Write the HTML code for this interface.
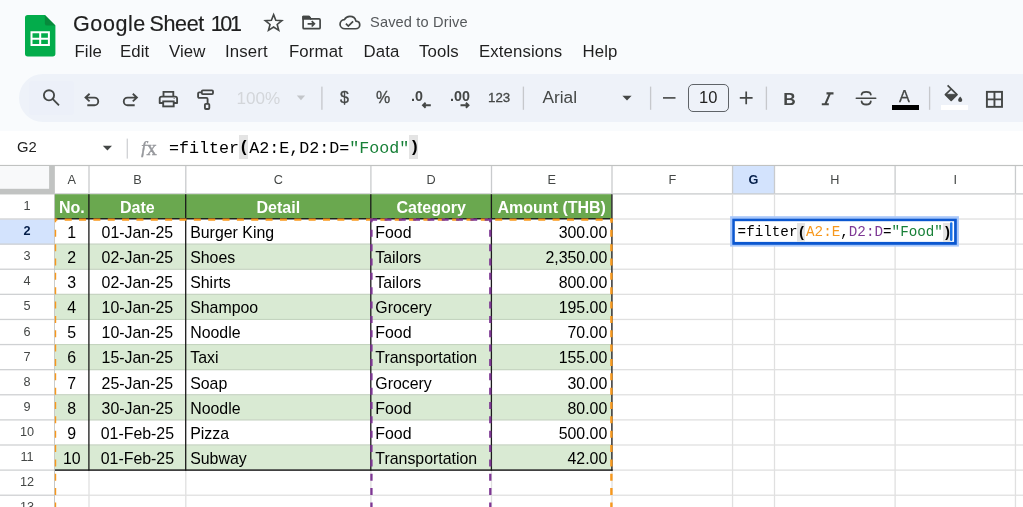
<!DOCTYPE html>
<html lang="en"><head><meta charset="utf-8"><title>Google Sheet 101</title>
<style>
*{box-sizing:border-box;margin:0;padding:0}
html,body{width:1023px;height:507px;overflow:hidden;background:#f9fbfd;font-family:"Liberation Sans",sans-serif;color:#1f1f1f}
.abs{position:absolute}
#app{position:relative;width:1023px;height:507px;overflow:hidden;will-change:transform}
.title{left:73px;top:11px;font-size:21.5px;line-height:26px;color:#1f1f1f;-webkit-text-stroke:.2px #1f1f1f;white-space:nowrap;letter-spacing:-0.35px}
.menu{top:42px;font-size:16.8px;letter-spacing:.12px;line-height:20px;color:#1f1f1f;white-space:nowrap}
.saved{left:370px;top:13px;font-size:14.6px;letter-spacing:.15px;line-height:18px;color:#55585b;white-space:nowrap}
.toolbar{left:19px;top:74px;width:1100px;height:47.5px;border-radius:24px;background:#eef2f9}
.tbt{font-size:15.5px;line-height:20px;color:#444746;white-space:nowrap}
.sep{width:1px;background:#c7c7c7}
.fbar{left:0;top:130.5px;width:1023px;height:35px;background:#fff}
.grid{left:0;top:165.3px;width:1023px;height:345px;background:#fff}
.vl{width:1px;background:#e1e1e1}
.hl{height:1px;background:#e1e1e1}
.ch{top:165.6px;height:28px;font-size:12.7px;line-height:28px;text-align:center;color:#444746}
.rh{left:0;width:54px;height:25px;font-size:12.7px;line-height:25px;text-align:center;color:#444746}
.c{height:25.1px;font-size:15.9px;line-height:27px;white-space:nowrap;color:#000;overflow:hidden}
.hd{font-weight:bold;color:#fff;text-align:center;font-size:16px}
.hp{background:linear-gradient(#e4e4e4,#e4e4e4) no-repeat left top/91% 100%;font-weight:bold}
.mono{font-family:"Liberation Mono","DejaVu Sans Mono",monospace}
</style></head><body><div id="app">

<svg class="abs" style="left:25px;top:14.850px" width="31" height="42" viewBox="0 0 31 42">
<path d="M2.800 0H19.900L30.400 10.600V38.750a2.800 2.800 0 0 1-2.800 2.800H2.800a2.800 2.800 0 0 1-2.800-2.800V2.800a2.800 2.800 0 0 1 2.800-2.800z" fill="#03ac4b"/>
<path d="M19.900 0L30.400 10.600H22.100a2.200 2.200 0 0 1-2.200-2.200z" fill="#078a3c"/>
<path d="M5.500 16.350h19.400v14.600H5.500z M7.500 18.350v4.300h6.700v-4.300z M16.200 18.350v4.300h6.700v-4.300z M7.500 24.650v4.300h6.700v-4.300z M16.200 24.650v4.300h6.700v-4.300z" fill="#fff" fill-rule="evenodd"/>
</svg>
<div class="abs title" style="letter-spacing:.6px">Google</div><div class="abs title" style="left:149.500px">Sheet</div><div class="abs title" style="left:210.800px;letter-spacing:-2.400px">101</div>
<svg class="abs" style="left:0;top:0" width="1023" height="70" viewBox="0 0 1023 70" fill="none" stroke="#444746" stroke-width="1.700" stroke-linejoin="round">
<path d="M273.60 14.60L275.80 20.27L281.87 20.61L277.17 24.46L278.71 30.34L273.60 27.05L268.49 30.34L270.03 24.46L265.33 20.61L271.40 20.27Z" stroke-width="1.600" stroke-linejoin="miter"/>
<path d="M303.100 16.700H309.200L310.800 18.900H319.100a1 1 0 0 1 1 1V27.700a1 1 0 0 1-1 1H304.100a1 1 0 0 1-1-1Z"/>
<path d="M303.100 16.700H309.200L310.800 18.900H303.100Z" fill="#444746"/>
<path d="M307.600 23.800H314M311.700 21.100L314.400 23.800L311.700 26.500" stroke-linejoin="miter"/>
<path transform="translate(340.050,13.350) scale(0.821,0.770)" vector-effect="non-scaling-stroke" d="M19.350 10.040C18.670 6.590 15.640 4 12 4 9.110 4 6.600 5.640 5.350 8.040 2.340 8.360 0 10.910 0 14c0 3.310 2.690 6 6 6h13c2.760 0 5-2.240 5-5 0-2.640-2.050-4.780-4.650-4.960z"/>
<path d="M345.900 23.700L348.300 26.100L353.100 21.300" stroke-linejoin="miter"/>
</svg>
<div class="abs saved">Saved to Drive</div>
<div class="abs menu" style="left:74.5px">File</div>
<div class="abs menu" style="left:120px">Edit</div>
<div class="abs menu" style="left:169px">View</div>
<div class="abs menu" style="left:225px">Insert</div>
<div class="abs menu" style="left:289px">Format</div>
<div class="abs menu" style="left:363.5px">Data</div>
<div class="abs menu" style="left:419px">Tools</div>
<div class="abs menu" style="left:479px">Extensions</div>
<div class="abs menu" style="left:582.5px">Help</div>
<div class="abs toolbar"></div>
<div class="abs" style="left:29px;top:80.500px;width:45px;height:34px;background:#ecf0f9;border-radius:3px"></div>
<svg class="abs" style="left:0;top:0" width="1023" height="130" viewBox="0 0 1023 130" fill="none" stroke="#444746" stroke-width="2" stroke-linecap="round" stroke-linejoin="round">
<circle cx="49" cy="95.300" r="5.100" stroke-width="1.850"/><path d="M52.600 98.900L59 105.300" stroke-linecap="butt" stroke-width="1.850"/>
<path d="M89.600 93.800L85.500 97.600L89.600 101.400M85.900 97.600H94.400a3.850 3.850 0 0 1 0 7.700H87.300" stroke-width="1.850" stroke-linecap="butt" stroke-linejoin="miter"/>
<path d="M132.800 93.800L136.900 97.600L132.800 101.400M136.500 97.600H127.600a3.850 3.850 0 0 0 0 7.700H134.700" stroke-width="1.850" stroke-linecap="butt" stroke-linejoin="miter"/>
<path d="M163.500 96V91.800H173.300V96" stroke-linecap="butt" stroke-width="1.850" stroke-linejoin="miter"/><path d="M163 103H159.700V98.600a2 2 0 0 1 2-2H175.100a2 2 0 0 1 2 2V103H174" stroke-width="1.850" stroke-linecap="butt"/><rect x="163.200" y="101.400" width="10.500" height="5" stroke-width="1.850" stroke-linejoin="miter"/><circle cx="174.100" cy="98.600" r=".5" fill="#444746" stroke="none"/>
<rect x="201.800" y="90.400" width="11.200" height="3.700" rx="1" stroke-width="1.850"/><path d="M201.800 92.300H199.300a1.200 1.200 0 0 0-1.200 1.200V96.700a1.200 1.200 0 0 0 1.200 1.200H206.400a1.200 1.200 0 0 1 1.200 1.200V103.600" stroke-linecap="butt" stroke-width="1.850"/><rect x="204.900" y="103.800" width="4.400" height="5.200" rx="1" stroke-width="1.850"/>
<path d="M430.800 105.300H423.400M425.600 102.800L423 105.300l2.600 2.500" stroke-width="1.900" stroke-linecap="butt" stroke-linejoin="miter"/>
<path d="M460.500 105.300H468.100M465.900 102.800L468.500 105.300l-2.600 2.500" stroke-width="1.900" stroke-linecap="butt" stroke-linejoin="miter"/>
<path d="M663 97.900H675.500" stroke-width="1.600" stroke-linecap="butt"/>
<path d="M739.800 97.900H752.600M746.200 91.500V104.300" stroke-width="1.700" stroke-linecap="butt"/>
<path d="M826.500 93.400H833.500M821.800 104.200H828.800M830 93.400L825.300 104.200" stroke-width="2.100" stroke-linecap="butt"/>
<path d="M856.300 98.200H875.700" stroke-width="1.600"/><path d="M870.800 94.600C870.600 92.900 868.700 91.900 866.200 91.900S861.800 92.900 861.600 94.600" stroke-width="1.800"/><path d="M861.600 101.300C861.800 103.400 863.700 104.500 866.200 104.500S870.600 103.400 870.800 101.300" stroke-width="1.800"/>
<rect x="986.900" y="91.850" width="15.100" height="15" stroke-width="1.900" stroke-linejoin="miter"/><path d="M994.450 91.850V106.850M986.900 99.350H1002" stroke-linecap="butt" stroke-width="1.900"/>
</svg>
<svg class="abs" style="left:0;top:0" width="1023" height="130" viewBox="0 0 1023 130" fill="#444746">
<path d="M947.600 85.400L957 94.700L951.200 100.300L945.400 94.700L951.200 89" fill="none" stroke="#444746" stroke-width="1.700" stroke-linejoin="round" stroke-linecap="butt"/>
<path d="M945.400 94.300H957L951.200 100.300Z" stroke="#444746" stroke-width=".8" stroke-linejoin="round"/>
<path d="M960.200 96.400s2.100 2.300 2.100 3.600a2.100 2.100 0 0 1-4.200 0c0-1.300 2.100-3.600 2.100-3.600z"/>
</svg>
<div class="abs tbt" style="left:236.500px;top:89.200px;color:#d3d6da;font-size:17.100px">100%</div>
<svg class="abs" style="left:294px;top:90px" width="16" height="14" viewBox="0 0 16 14"><path d="M2.800 5.500H11.100L6.950 10.200Z" fill="#c3c6ca"/></svg>
<div class="abs tbt" style="left:340px;top:88px;font-size:16px;-webkit-text-stroke:.35px #444746">$</div>
<div class="abs tbt" style="left:376px;top:88px;font-size:16px;-webkit-text-stroke:.3px #444746">%</div>
<div class="abs tbt" style="left:411px;top:85.600px;font-weight:bold;font-size:15.200px;transform:scaleX(.94);transform-origin:0 0">.0</div>
<div class="abs tbt" style="left:449.500px;top:85.600px;font-weight:bold;font-size:15.200px;transform:scaleX(.94);transform-origin:0 0">.00</div>
<div class="abs tbt" style="left:488px;top:88.300px;font-size:13.300px;-webkit-text-stroke:.3px #444746">123</div>
<div class="abs tbt" style="left:542.500px;top:87px;font-size:17.300px">Arial</div>
<svg class="abs" style="left:620px;top:90px" width="16" height="14" viewBox="0 0 16 14"><path d="M2.400 5.700H11.600L7 10.400Z" fill="#444746"/></svg>
<div class="abs" style="left:688px;top:84px;width:40.500px;height:28px;border:1.200px solid #5f6368;border-radius:5px;text-align:center;font-size:16.500px;line-height:25.500px;color:#1f1f1f">10</div>
<div class="abs tbt" style="left:783.300px;top:89.200px;font-weight:bold;font-size:17.300px">B</div>
<div class="abs tbt" style="left:899px;top:86.300px;font-size:16.300px;-webkit-text-stroke:.25px #444746">A</div>
<div class="abs" style="left:891.700px;top:105.200px;width:27.200px;height:4.500px;background:#000"></div>
<div class="abs" style="left:940.500px;top:105.200px;width:27.500px;height:4.500px;background:#fff"></div>
<svg class="abs" style="left:0;top:0" width="1023" height="130" viewBox="0 0 1023 130"><rect x="321.25" y="86.600" width="1.300" height="23.200" fill="#c6c8cc"/><rect x="522.75" y="86.600" width="1.300" height="23.200" fill="#c6c8cc"/><rect x="649.95" y="86.600" width="1.300" height="23.200" fill="#c6c8cc"/><rect x="765.75" y="86.600" width="1.300" height="23.200" fill="#c6c8cc"/><rect x="928.95" y="86.600" width="1.300" height="23.200" fill="#c6c8cc"/></svg>
<div class="abs fbar"></div>
<div class="abs" style="left:17px;top:137.100px;font-size:14.800px;line-height:20px;color:#1f1f1f">G2</div>
<svg class="abs" style="left:100px;top:140px" width="16" height="14" viewBox="0 0 16 14"><path d="M2.800 5.700H12L7.400 10.400Z" fill="#444746"/></svg>
<svg class="abs" style="left:120px;top:136px" width="16" height="26" viewBox="0 0 16 26"><rect x="6.700" y="2.600" width="1.100" height="20" fill="#c7c9cc"/></svg>
<div class="abs" style="left:141.300px;top:136.100px;font-size:17.500px;line-height:22px;font-style:italic;font-family:'Liberation Serif',serif;color:#97999d;-webkit-text-stroke:.45px #97999d">f</div><div class="abs" style="left:146.400px;top:136.900px;font-size:20.500px;line-height:22px;font-family:'Liberation Serif',serif;color:#97999d;-webkit-text-stroke:.4px #97999d">x</div>
<div class="abs mono" style="left:169px;top:137.500px;font-size:16.700px;line-height:21px;color:#000;white-space:pre">=filter<span class="hp" style="padding:3.300px 0 1.500px">(</span>A2:E,D2:D=<span style="color:#188038">"Food"</span><span class="hp" style="padding:3.300px 0 1.500px">)</span></div>
<div class="abs grid"></div>
<svg class="abs" style="left:0;top:0" width="1023" height="507" viewBox="0 0 1023 507"><rect x="0.00" y="164.90" width="1023.00" height="1.20" fill="#c0c2c1"/>
<rect x="0.00" y="166.00" width="54.85" height="28.45" fill="#c1c3c2"/>
<rect x="0.00" y="166.00" width="49.10" height="22.80" fill="#f8f9fa"/>
<rect x="732.55" y="166.00" width="41.95" height="27.90" fill="#d3e3fd"/>
<rect x="0.00" y="219.41" width="54.55" height="25.11" fill="#d3e3fd"/>
<rect x="88.35" y="166.00" width="1.30" height="27.90" fill="#c9cbcd"/>
<rect x="185.15" y="166.00" width="1.30" height="27.90" fill="#c9cbcd"/>
<rect x="370.25" y="166.00" width="1.30" height="27.90" fill="#c9cbcd"/>
<rect x="490.85" y="166.00" width="1.30" height="27.90" fill="#c9cbcd"/>
<rect x="611.35" y="166.00" width="1.30" height="27.90" fill="#c9cbcd"/>
<rect x="731.90" y="166.00" width="1.30" height="27.90" fill="#c9cbcd"/>
<rect x="773.85" y="166.00" width="1.30" height="27.90" fill="#c9cbcd"/>
<rect x="894.45" y="166.00" width="1.30" height="27.90" fill="#c9cbcd"/>
<rect x="1014.80" y="166.00" width="1.30" height="27.90" fill="#c9cbcd"/>
<rect x="54.55" y="193.25" width="1000.00" height="1.30" fill="#c9cbcd"/>
<rect x="0.00" y="218.36" width="54.55" height="1.30" fill="#cfd1d3"/>
<rect x="0.00" y="243.47" width="54.55" height="1.30" fill="#cfd1d3"/>
<rect x="0.00" y="268.58" width="54.55" height="1.30" fill="#cfd1d3"/>
<rect x="0.00" y="293.69" width="54.55" height="1.30" fill="#cfd1d3"/>
<rect x="0.00" y="318.80" width="54.55" height="1.30" fill="#cfd1d3"/>
<rect x="0.00" y="343.91" width="54.55" height="1.30" fill="#cfd1d3"/>
<rect x="0.00" y="369.02" width="54.55" height="1.30" fill="#cfd1d3"/>
<rect x="0.00" y="394.13" width="54.55" height="1.30" fill="#cfd1d3"/>
<rect x="0.00" y="419.24" width="54.55" height="1.30" fill="#cfd1d3"/>
<rect x="0.00" y="444.35" width="54.55" height="1.30" fill="#cfd1d3"/>
<rect x="0.00" y="469.46" width="54.55" height="1.30" fill="#cfd1d3"/>
<rect x="0.00" y="494.57" width="54.55" height="1.30" fill="#cfd1d3"/>
<rect x="0.00" y="519.68" width="54.55" height="1.30" fill="#cfd1d3"/>
<rect x="54.10" y="193.95" width="0.90" height="330.00" fill="#c0c2c1"/>
<rect x="88.35" y="193.85" width="1.30" height="330.00" fill="#e0e0e0"/>
<rect x="185.15" y="193.85" width="1.30" height="330.00" fill="#e0e0e0"/>
<rect x="370.25" y="193.85" width="1.30" height="330.00" fill="#e0e0e0"/>
<rect x="490.85" y="193.85" width="1.30" height="330.00" fill="#e0e0e0"/>
<rect x="611.35" y="193.85" width="1.30" height="330.00" fill="#e0e0e0"/>
<rect x="731.90" y="193.85" width="1.30" height="330.00" fill="#e0e0e0"/>
<rect x="773.85" y="193.85" width="1.30" height="330.00" fill="#e0e0e0"/>
<rect x="894.45" y="193.85" width="1.30" height="330.00" fill="#e0e0e0"/>
<rect x="1014.80" y="193.85" width="1.30" height="330.00" fill="#e0e0e0"/>
<rect x="55.00" y="218.36" width="1000.00" height="1.30" fill="#e0e0e0"/>
<rect x="55.00" y="243.47" width="1000.00" height="1.30" fill="#e0e0e0"/>
<rect x="55.00" y="268.58" width="1000.00" height="1.30" fill="#e0e0e0"/>
<rect x="55.00" y="293.69" width="1000.00" height="1.30" fill="#e0e0e0"/>
<rect x="55.00" y="318.80" width="1000.00" height="1.30" fill="#e0e0e0"/>
<rect x="55.00" y="343.91" width="1000.00" height="1.30" fill="#e0e0e0"/>
<rect x="55.00" y="369.02" width="1000.00" height="1.30" fill="#e0e0e0"/>
<rect x="55.00" y="394.13" width="1000.00" height="1.30" fill="#e0e0e0"/>
<rect x="55.00" y="419.24" width="1000.00" height="1.30" fill="#e0e0e0"/>
<rect x="55.00" y="444.35" width="1000.00" height="1.30" fill="#e0e0e0"/>
<rect x="55.00" y="469.46" width="1000.00" height="1.30" fill="#e0e0e0"/>
<rect x="55.00" y="494.57" width="1000.00" height="1.30" fill="#e0e0e0"/>
<rect x="55.00" y="519.68" width="1000.00" height="1.30" fill="#e0e0e0"/>
<rect x="54.90" y="194.25" width="556.60" height="24.76" fill="#6aa84f"/>
<rect x="54.90" y="219.66" width="556.60" height="23.81" fill="#fff"/>
<rect x="54.90" y="244.52" width="556.60" height="24.31" fill="#d9ead3"/>
<rect x="54.90" y="269.88" width="556.60" height="23.81" fill="#fff"/>
<rect x="54.90" y="294.74" width="556.60" height="24.31" fill="#d9ead3"/>
<rect x="54.90" y="320.10" width="556.60" height="23.81" fill="#fff"/>
<rect x="54.90" y="344.96" width="556.60" height="24.31" fill="#d9ead3"/>
<rect x="54.90" y="370.32" width="556.60" height="23.81" fill="#fff"/>
<rect x="54.90" y="395.18" width="556.60" height="24.31" fill="#d9ead3"/>
<rect x="54.90" y="420.54" width="556.60" height="23.81" fill="#fff"/>
<rect x="54.90" y="445.40" width="556.60" height="24.31" fill="#d9ead3"/>
<rect x="54.90" y="243.57" width="556.60" height="1.10" fill="#c4d4bf"/>
<rect x="54.90" y="268.68" width="556.60" height="1.10" fill="#c4d4bf"/>
<rect x="54.90" y="293.79" width="556.60" height="1.10" fill="#c4d4bf"/>
<rect x="54.90" y="318.90" width="556.60" height="1.10" fill="#c4d4bf"/>
<rect x="54.90" y="344.01" width="556.60" height="1.10" fill="#c4d4bf"/>
<rect x="54.90" y="369.12" width="556.60" height="1.10" fill="#c4d4bf"/>
<rect x="54.90" y="394.23" width="556.60" height="1.10" fill="#c4d4bf"/>
<rect x="54.90" y="419.34" width="556.60" height="1.10" fill="#c4d4bf"/>
<rect x="54.90" y="444.45" width="556.60" height="1.10" fill="#c4d4bf"/>
<rect x="88.25" y="194.25" width="1.30" height="276.46" fill="#1a1a1a"/>
<rect x="185.05" y="194.25" width="1.30" height="276.46" fill="#1a1a1a"/>
<rect x="370.15" y="194.25" width="1.30" height="276.46" fill="#1a1a1a"/>
<rect x="490.75" y="194.25" width="1.30" height="276.46" fill="#1a1a1a"/>
<rect x="611.25" y="194.25" width="1.30" height="276.46" fill="#1a1a1a"/>
<rect x="54.90" y="469.36" width="557.75" height="1.45" fill="#1a1a1a"/>
<rect x="54.90" y="218.06" width="557.75" height="1.40" fill="#1a1a1a"/></svg>
<div class="abs ch" style="left:54.55px;width:34.45px">A</div>
<div class="abs ch" style="left:89.0px;width:96.80000000000001px">B</div>
<div class="abs ch" style="left:185.8px;width:185.09999999999997px">C</div>
<div class="abs ch" style="left:370.9px;width:120.60000000000002px">D</div>
<div class="abs ch" style="left:491.5px;width:120.5px">E</div>
<div class="abs ch" style="left:612.0px;width:120.54999999999995px">F</div>
<div class="abs ch" style="left:732.55px;width:41.950000000000045px;font-weight:bold;color:#041e49">G</div>
<div class="abs ch" style="left:774.5px;width:120.60000000000002px">H</div>
<div class="abs ch" style="left:895.1px;width:120.35000000000002px">I</div>
<div class="abs rh" style="top:193.95000000000002px">1</div>
<div class="abs rh" style="top:219.06px;font-weight:bold;color:#041e49">2</div>
<div class="abs rh" style="top:244.17000000000002px">3</div>
<div class="abs rh" style="top:269.28000000000003px">4</div>
<div class="abs rh" style="top:294.39000000000004px">5</div>
<div class="abs rh" style="top:319.5px">6</div>
<div class="abs rh" style="top:344.61px">7</div>
<div class="abs rh" style="top:369.71999999999997px">8</div>
<div class="abs rh" style="top:394.83px">9</div>
<div class="abs rh" style="top:419.94px">10</div>
<div class="abs rh" style="top:445.05px">11</div>
<div class="abs rh" style="top:470.16px">12</div>
<div class="abs rh" style="top:495.27000000000004px">13</div>
<div class="abs c hd" style="left:54.55px;top:194.20000000000002px;width:34.45px">No.</div>
<div class="abs c hd" style="left:89.0px;top:194.20000000000002px;width:96.80000000000001px">Date</div>
<div class="abs c hd" style="left:185.8px;top:194.20000000000002px;width:185.09999999999997px">Detail</div>
<div class="abs c hd" style="left:370.9px;top:194.20000000000002px;width:120.60000000000002px">Category</div>
<div class="abs c hd" style="left:491.5px;top:194.20000000000002px;width:120.5px">Amount (THB)</div>
<div class="abs c" style="left:54.55px;top:218.85999999999999px;width:34.45px;text-align:center">1</div>
<div class="abs c" style="left:89.0px;top:218.85999999999999px;width:96.80000000000001px;text-align:center">01-Jan-25</div>
<div class="abs c" style="left:190.20000000000002px;top:218.85999999999999px;width:180.09999999999997px">Burger King</div>
<div class="abs c" style="left:375.29999999999995px;top:218.85999999999999px;width:115.60000000000002px">Food</div>
<div class="abs c" style="left:491.5px;top:218.85999999999999px;width:115.8px;text-align:right">300.00</div>
<div class="abs c" style="left:54.55px;top:243.97px;width:34.45px;text-align:center">2</div>
<div class="abs c" style="left:89.0px;top:243.97px;width:96.80000000000001px;text-align:center">02-Jan-25</div>
<div class="abs c" style="left:190.20000000000002px;top:243.97px;width:180.09999999999997px">Shoes</div>
<div class="abs c" style="left:375.29999999999995px;top:243.97px;width:115.60000000000002px">Tailors</div>
<div class="abs c" style="left:491.5px;top:243.97px;width:115.8px;text-align:right">2,350.00</div>
<div class="abs c" style="left:54.55px;top:269.08000000000004px;width:34.45px;text-align:center">3</div>
<div class="abs c" style="left:89.0px;top:269.08000000000004px;width:96.80000000000001px;text-align:center">02-Jan-25</div>
<div class="abs c" style="left:190.20000000000002px;top:269.08000000000004px;width:180.09999999999997px">Shirts</div>
<div class="abs c" style="left:375.29999999999995px;top:269.08000000000004px;width:115.60000000000002px">Tailors</div>
<div class="abs c" style="left:491.5px;top:269.08000000000004px;width:115.8px;text-align:right">800.00</div>
<div class="abs c" style="left:54.55px;top:294.19000000000005px;width:34.45px;text-align:center">4</div>
<div class="abs c" style="left:89.0px;top:294.19000000000005px;width:96.80000000000001px;text-align:center">10-Jan-25</div>
<div class="abs c" style="left:190.20000000000002px;top:294.19000000000005px;width:180.09999999999997px">Shampoo</div>
<div class="abs c" style="left:375.29999999999995px;top:294.19000000000005px;width:115.60000000000002px">Grocery</div>
<div class="abs c" style="left:491.5px;top:294.19000000000005px;width:115.8px;text-align:right">195.00</div>
<div class="abs c" style="left:54.55px;top:319.3px;width:34.45px;text-align:center">5</div>
<div class="abs c" style="left:89.0px;top:319.3px;width:96.80000000000001px;text-align:center">10-Jan-25</div>
<div class="abs c" style="left:190.20000000000002px;top:319.3px;width:180.09999999999997px">Noodle</div>
<div class="abs c" style="left:375.29999999999995px;top:319.3px;width:115.60000000000002px">Food</div>
<div class="abs c" style="left:491.5px;top:319.3px;width:115.8px;text-align:right">70.00</div>
<div class="abs c" style="left:54.55px;top:344.41px;width:34.45px;text-align:center">6</div>
<div class="abs c" style="left:89.0px;top:344.41px;width:96.80000000000001px;text-align:center">15-Jan-25</div>
<div class="abs c" style="left:190.20000000000002px;top:344.41px;width:180.09999999999997px">Taxi</div>
<div class="abs c" style="left:375.29999999999995px;top:344.41px;width:115.60000000000002px">Transportation</div>
<div class="abs c" style="left:491.5px;top:344.41px;width:115.8px;text-align:right">155.00</div>
<div class="abs c" style="left:54.55px;top:369.52px;width:34.45px;text-align:center">7</div>
<div class="abs c" style="left:89.0px;top:369.52px;width:96.80000000000001px;text-align:center">25-Jan-25</div>
<div class="abs c" style="left:190.20000000000002px;top:369.52px;width:180.09999999999997px">Soap</div>
<div class="abs c" style="left:375.29999999999995px;top:369.52px;width:115.60000000000002px">Grocery</div>
<div class="abs c" style="left:491.5px;top:369.52px;width:115.8px;text-align:right">30.00</div>
<div class="abs c" style="left:54.55px;top:394.63px;width:34.45px;text-align:center">8</div>
<div class="abs c" style="left:89.0px;top:394.63px;width:96.80000000000001px;text-align:center">30-Jan-25</div>
<div class="abs c" style="left:190.20000000000002px;top:394.63px;width:180.09999999999997px">Noodle</div>
<div class="abs c" style="left:375.29999999999995px;top:394.63px;width:115.60000000000002px">Food</div>
<div class="abs c" style="left:491.5px;top:394.63px;width:115.8px;text-align:right">80.00</div>
<div class="abs c" style="left:54.55px;top:419.74px;width:34.45px;text-align:center">9</div>
<div class="abs c" style="left:89.0px;top:419.74px;width:96.80000000000001px;text-align:center">01-Feb-25</div>
<div class="abs c" style="left:190.20000000000002px;top:419.74px;width:180.09999999999997px">Pizza</div>
<div class="abs c" style="left:375.29999999999995px;top:419.74px;width:115.60000000000002px">Food</div>
<div class="abs c" style="left:491.5px;top:419.74px;width:115.8px;text-align:right">500.00</div>
<div class="abs c" style="left:54.55px;top:444.85px;width:34.45px;text-align:center">10</div>
<div class="abs c" style="left:89.0px;top:444.85px;width:96.80000000000001px;text-align:center">01-Feb-25</div>
<div class="abs c" style="left:190.20000000000002px;top:444.85px;width:180.09999999999997px">Subway</div>
<div class="abs c" style="left:375.29999999999995px;top:444.85px;width:115.60000000000002px">Transportation</div>
<div class="abs c" style="left:491.5px;top:444.85px;width:115.8px;text-align:right">42.00</div>
<svg class="abs" style="left:0;top:0" width="1023" height="507" viewBox="0 0 1023 507" fill="none">
<path d="M54.900 219.7H613" stroke="#f7981d" stroke-width="2.300" stroke-dasharray="7 7.350" stroke-dashoffset="4.550"/>
<path d="M55.500 218.6V222.300M55.500 229.8V507" stroke="#f7981d" stroke-width="1.400" stroke-dasharray="7 7.350"/>
<path d="M611.500 218.6V222.800" stroke="#f7981d" stroke-width="2.400"/>
<path d="M611.400 229.8V507" stroke="#f7981d" stroke-width="2.400" stroke-dasharray="7 7.350"/>
<path d="M370.300 219.7H491.500" stroke="#7e3794" stroke-width="2.300" stroke-dasharray="6.800 7.500"/>
<path d="M371.450 218.6V222.300" stroke="#7e3794" stroke-width="2.300"/>
<path d="M371.450 229.8V507" stroke="#7e3794" stroke-width="2.300" stroke-dasharray="7 7.350"/>
<path d="M490.300 218.6V222.300" stroke="#7e3794" stroke-width="2.300"/>
<path d="M490.300 229.8V507" stroke="#7e3794" stroke-width="2.300" stroke-dasharray="7 7.350"/>
</svg>
<svg class="abs" style="left:0;top:0" width="1023" height="507" viewBox="0 0 1023 507">
<rect x="730.100" y="216.200" width="228.800" height="30.400" fill="#a8c7fa"/>
<rect x="732.300" y="218.700" width="224.500" height="26.100" fill="#0b57d0"/>
<rect x="734.800" y="221.200" width="219.300" height="20.700" fill="#fff"/>
<rect x="950" y="222.300" width="2.500" height="18.700" rx="1.200" fill="#1a73e8"/>
</svg>
<div class="abs mono" style="left:737.600px;top:222.400px;font-size:14.250px;line-height:20px;color:#000;white-space:pre">=filter<span class="hp" style="padding:1.500px 0 1.500px">(</span><span style="color:#f7981d">A2:E</span>,<span style="color:#7e3794">D2:D</span>=<span style="color:#188038">"Food"</span><span class="hp" style="padding:1.500px 0 1.500px">)</span></div>
</div></body></html>
